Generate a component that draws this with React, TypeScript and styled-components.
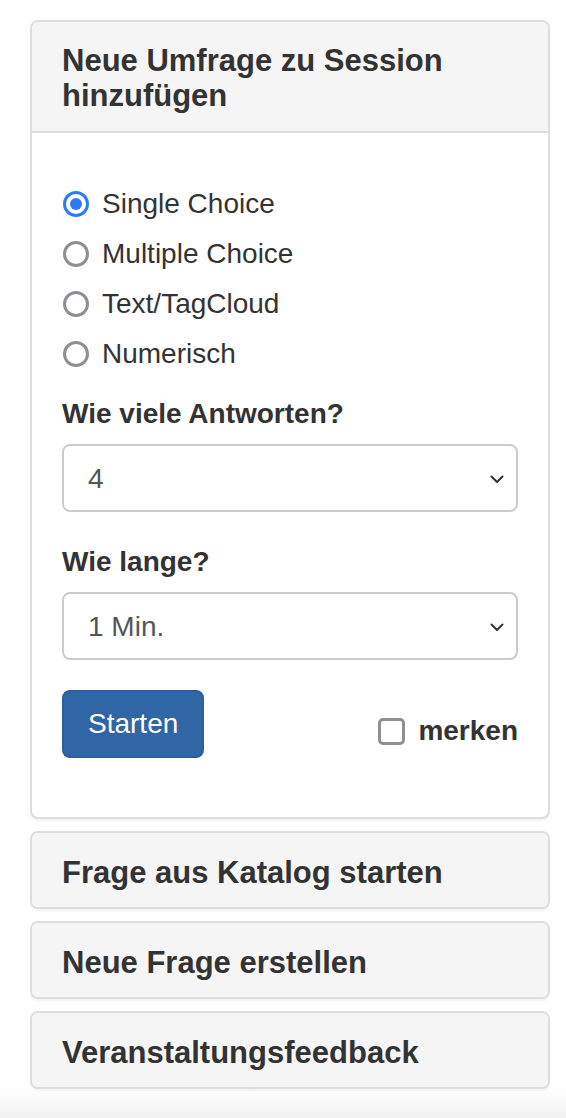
import React from "react";
import styled, { createGlobalStyle } from "styled-components";

const GlobalStyle = createGlobalStyle`
  html, body {
    margin: 0;
    padding: 0;
  }
  body {
    min-height: 100vh;
    font-family: "Liberation Sans", Arial, Helvetica, sans-serif;
    color: #333;
    background: linear-gradient(to bottom, #ffffff calc(100% - 32px), #f1f1f1 100%);
  }
`;

const Page = styled.div`
  padding: 20px 16px 20px 30px;
  display: flex;
  flex-direction: column;
  gap: 12px;
`;

const Panel = styled.section`
  background: #fff;
  border: 2px solid #dddddd;
  border-radius: 8px;
  box-shadow: 0 2px 2px rgba(0, 0, 0, 0.05);
  overflow: hidden;
`;

const PanelHeading = styled.div<{ $open?: boolean }>`
  background: #f5f5f5;
  padding: ${(p) => (p.$open ? "21px 30px 18px" : "22px 30px 17px")};
  border-bottom: ${(p) => (p.$open ? "2px solid #dddddd" : "none")};
`;

const PanelTitle = styled.h3`
  margin: 0;
  font-family: "Liberation Sans", Arial, sans-serif;
  font-size: 31px;
  font-weight: 700;
  line-height: 35px;
  color: #333;
`;

const PanelBody = styled.div`
  padding: 30px 30px 29px;
`;

const RadioGroup = styled.div`
  display: flex;
  flex-direction: column;
  gap: 10px;
  margin: 21px 0 20px;
`;

const RadioRow = styled.label`
  display: flex;
  align-items: center;
  gap: 13px;
  height: 40px;
  font-size: 28px;
  color: #333;
  padding-left: 1px;
`;

const RadioMark = styled.span<{ $checked?: boolean }>`
  box-sizing: border-box;
  width: 26px;
  height: 26px;
  border-radius: 50%;
  flex: none;
  background: #fff;
  border: ${(p) => (p.$checked ? "3px solid #2f7bf5" : "3px solid #8f8e96")};
  display: flex;
  align-items: center;
  justify-content: center;
  &::after {
    content: "";
    display: ${(p) => (p.$checked ? "block" : "none")};
    width: 12px;
    height: 12px;
    border-radius: 50%;
    background: #2f7bf5;
  }
`;

const FormGroup = styled.div`
  margin-bottom: 30px;
`;

const FieldLabel = styled.div`
  font-size: 28px;
  font-weight: 700;
  line-height: 40px;
  margin-bottom: 10px;
  color: #333;
`;

const SelectBox = styled.div`
  box-sizing: border-box;
  height: 68px;
  border: 2px solid #cccccc;
  border-radius: 8px;
  padding: 2px 12px 0 24px;
  display: flex;
  align-items: center;
  justify-content: space-between;
  font-size: 28px;
  color: #555;
  background: #fff;
`;

const ActionRow = styled.div`
  display: flex;
  justify-content: space-between;
  align-items: flex-start;
  margin-bottom: 30px;
`;

const PrimaryButton = styled.button`
  box-sizing: border-box;
  height: 68px;
  padding: 0 24px;
  border: 2px solid #2c5f9e;
  border-radius: 8px;
  background: #3065a6;
  color: #fff;
  font-family: "Liberation Sans", Arial, sans-serif;
  font-size: 28px;
  line-height: 40px;
  cursor: pointer;
`;

const CheckRow = styled.label`
  display: flex;
  align-items: center;
  gap: 13px;
  margin-top: 21px;
  height: 40px;
  font-size: 28px;
  font-weight: 700;
  color: #333;
`;

const CheckMark = styled.span`
  box-sizing: border-box;
  width: 27px;
  height: 27px;
  border: 3px solid #8f8e96;
  border-radius: 5px;
  background: #fff;
`;

const Chevron = () => (
  <svg width="14" height="9" viewBox="0 0 14 9" fill="none">
    <path d="M1.5 1.5 L7 7 L12.5 1.5" stroke="#333" strokeWidth="2" strokeLinecap="round" strokeLinejoin="round" />
  </svg>
);

const options = [
  { label: "Single Choice", checked: true },
  { label: "Multiple Choice", checked: false },
  { label: "Text/TagCloud", checked: false },
  { label: "Numerisch", checked: false },
];

const collapsed = ["Frage aus Katalog starten", "Neue Frage erstellen", "Veranstaltungsfeedback"];

export default function App() {
  return (
    <>
      <GlobalStyle />
      <Page>
        <Panel>
          <PanelHeading $open>
            <PanelTitle>Neue Umfrage zu Session hinzufügen</PanelTitle>
          </PanelHeading>
          <PanelBody>
            <RadioGroup>
              {options.map((o) => (
                <RadioRow key={o.label}>
                  <RadioMark $checked={o.checked} />
                  {o.label}
                </RadioRow>
              ))}
            </RadioGroup>
            <FormGroup>
              <FieldLabel>Wie viele Antworten?</FieldLabel>
              <SelectBox>
                <span>4</span>
                <Chevron />
              </SelectBox>
            </FormGroup>
            <FormGroup>
              <FieldLabel>Wie lange?</FieldLabel>
              <SelectBox>
                <span>1 Min.</span>
                <Chevron />
              </SelectBox>
            </FormGroup>
            <ActionRow>
              <PrimaryButton>Starten</PrimaryButton>
              <CheckRow>
                <CheckMark />
                merken
              </CheckRow>
            </ActionRow>
          </PanelBody>
        </Panel>
        {collapsed.map((t) => (
          <Panel key={t}>
            <PanelHeading>
              <PanelTitle>{t}</PanelTitle>
            </PanelHeading>
          </Panel>
        ))}
      </Page>
    </>
  );
}
